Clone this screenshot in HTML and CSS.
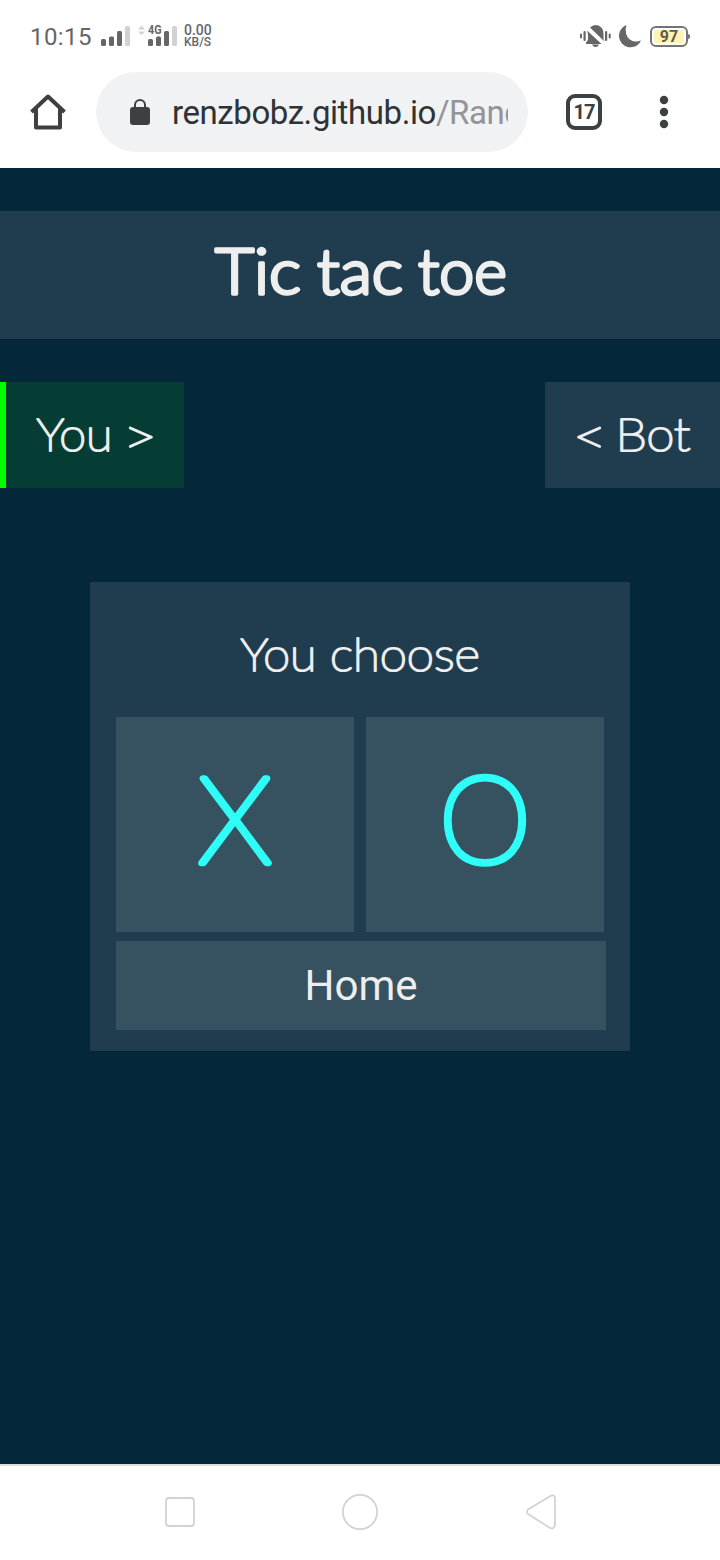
FILE: index.html
```html
<!DOCTYPE html>
<html lang="en">
<head>
<meta charset="utf-8">
<title>Tic tac toe</title>
<link rel="stylesheet" href="styles.css">
</head>
<body>
<header class="status">
  <span class="clock">10:15</span>
  <svg class="signal" width="30" height="20" viewBox="0 0 30 20"><g fill="#666"><rect x="0" y="13" width="5" height="7" rx="1.5"/><rect x="8" y="10.500" width="5" height="9.500" rx="1.500"/><rect x="16" y="5" width="5" height="15" rx="1.500"/></g><rect x="24" y="0" width="5" height="20" rx="1.500" fill="#d2d2d2"/></svg>
  <svg class="mobile" width="40" height="22" viewBox="0 0 40 22"><path d="M0 5.500 3.500 1.500 7 5.500zM0 7.500 3.500 11 7 7.500z" fill="#d2d2d2"/><text class="gen" x="10" y="10" textLength="13.500" lengthAdjust="spacingAndGlyphs">4G</text><g fill="#666"><rect x="10" y="15" width="5" height="7" rx="1.500"/><rect x="18" y="12.500" width="5" height="9.500" rx="1.500"/><rect x="26" y="7" width="5" height="15" rx="1.500"/></g><rect x="34" y="2" width="5" height="20" rx="1.500" fill="#d2d2d2"/></svg>
  <span class="speed"><span class="rate">0.00</span><span class="unit">KB/S</span></span>
  <svg class="muted" width="32" height="24" viewBox="0 0 32 24"><g fill="#666"><rect x="0" y="9.500" width="2" height="5" rx="1"/><rect x="3.500" y="7" width="2.200" height="10" rx="1"/><rect x="25" y="7" width="2.200" height="10" rx="1"/><rect x="28.700" y="9.500" width="2" height="5" rx="1"/><path d="M7 6.500 21.500 20H6v-1.500L8 16v-5.500Q7.500 8 7 6.500z"/><path d="M10 3.500Q12 1.500 15 1q8 0 8.500 8.500V15l1 2.500zM12 20.500h7Q18 23 15.500 23T12 20.500z"/></g></svg>
  <svg class="moon" width="24" height="24" viewBox="0 0 24 24"><path d="M8.500 1A11.500 11.500 0 1 0 23 16.500Q14 19.500 9.500 13 6.500 7.500 8.500 1z" fill="#666"/></svg>
  <span class="battery"><span class="charge">97</span></span>
</header>
<nav class="toolbar">
  <svg class="home" width="36" height="38" viewBox="0 0 36 38"><path d="M1.500 19 18 3.500 34.500 19M6 15.500V34.500h24V15.500" fill="none" stroke="#3c4043" stroke-width="4" stroke-linejoin="round"/></svg>
  <div class="address">
    <svg class="lock" width="20" height="26" viewBox="0 0 20 26"><rect y="8" width="20" height="18" rx="3" fill="#3c4043"/><path d="M5 9V6a5 5 0 0 1 10 0v3" fill="none" stroke="#3c4043" stroke-width="2"/></svg>
    <div class="url">renzbobz.github.io<span class="path">/Rand</span></div>
  </div>
  <span class="tabs">17</span>
  <svg class="more" width="10" height="34" viewBox="0 0 10 34"><g fill="#3c4043"><circle cx="5" cy="5" r="4.200"/><circle cx="5" cy="17" r="4.200"/><circle cx="5" cy="29" r="4.200"/></g></svg>
</nav>
<main class="game">
  <h1 class="title"><svg width="720" height="128"><text class="heading" x="215" y="83" textLength="86" lengthAdjust="spacingAndGlyphs">Tic</text><text class="heading" x="317" y="83" textLength="86" lengthAdjust="spacingAndGlyphs">tac</text><text class="heading" x="418" y="83" textLength="89" lengthAdjust="spacingAndGlyphs">toe</text></svg></h1>
  <div class="players">
    <div class="player active"><svg width="178" height="106"><text class="label" x="30.500" y="69" textLength="76" lengthAdjust="spacingAndGlyphs">You</text><text class="label sign" x="117" y="71.500" textLength="34" lengthAdjust="spacingAndGlyphs">&gt;</text></svg></div>
    <div class="player"><svg width="175" height="106"><text class="label sign" x="28" y="71.500" textLength="34" lengthAdjust="spacingAndGlyphs">&lt;</text><text class="label" x="70.500" y="69" textLength="75" lengthAdjust="spacingAndGlyphs">Bot</text></svg></div>
  </div>
  <section class="dialog">
    <svg class="prompt" width="540" height="135"><text class="label" x="150.500" y="89" textLength="76" lengthAdjust="spacingAndGlyphs">You</text><text class="label" x="240" y="89" textLength="150" lengthAdjust="spacingAndGlyphs">choose</text></svg>
    <div class="choices">
      <button class="choice"><svg width="238" height="214"><text class="mark" x="82" y="146" textLength="74" lengthAdjust="spacingAndGlyphs">X</text></svg></button>
      <button class="choice"><svg width="238" height="214"><text class="mark" x="73" y="146" textLength="92" lengthAdjust="spacingAndGlyphs">O</text></svg></button>
    </div>
    <button class="back">Home</button>
  </section>
</main>
<footer class="system-nav">
  <svg width="36" height="36" viewBox="0 0 36 36"><rect x="4" y="4" width="28" height="28" rx="3"/></svg>
  <svg width="36" height="36" viewBox="0 0 36 36"><circle cx="18" cy="18" r="17.100"/></svg>
  <svg width="36" height="36" viewBox="0 0 36 36"><path d="M6 15.500 28 2.200Q32 0 33 3.500V31q-1 4.500-5 3L6 20Q4 18 6 15.500z"/></svg>
</footer>
</body>
</html>
```
FILE: styles.css
```css
* { box-sizing: border-box; }
body { margin: 0; width: 720px; height: 1560px; display: flex; flex-direction: column; background: #fff; font-family: Roboto, sans-serif; overflow: hidden; }
svg { display: block; flex: none; }
button { border: 0; padding: 0; margin: 0; }

.status { height: 72px; display: flex; align-items: center; padding: 0 30px; color: #666; }
.clock { width: 71px; font-size: 24px; line-height: 28px; letter-spacing: .4px; padding-top: 2px; }
.signal { margin-right: 7px; }
.mobile { margin-top: -2px; }
.gen { font: 700 12px Roboto, sans-serif; fill: #666; }
.speed { display: flex; flex-direction: column; margin-left: 6px; width: 40px; font-weight: 500; }
.rate { font-size: 14px; line-height: 12px; }
.unit { font-size: 12px; line-height: 12px; }
.muted { margin-left: auto; }
.moon { margin: 0 8px 0 6px; }
.battery { position: relative; width: 38px; height: 21px; border: 2px solid #747474; border-radius: 6px; padding: 2px; margin-right: 2px; }
.battery::after { content: ""; position: absolute; right: -4px; top: 6px; width: 2px; height: 5px; background: #747474; border-radius: 0 2px 2px 0; }
.charge { display: block; height: 13px; background: #fff3b8; border-radius: 3px; text-align: center; font-size: 16px; line-height: 14px; font-weight: 700; color: #5f5b4a; }

.toolbar { height: 96px; display: flex; align-items: center; padding: 0 50px 16px 30px; }
.address { display: flex; align-items: center; width: 432px; height: 80px; margin-left: 30px; padding: 0 20px 0 34px; border-radius: 40px; background: #f1f2f4; }
.lock { margin-right: 22px; }
.url { flex: 1; overflow: hidden; white-space: nowrap; font-size: 33px; letter-spacing: -.42px; line-height: 44px; color: #303336; padding-top: 2px; }
.path { color: #929496; }
.tabs { width: 36px; height: 36px; margin-left: 38px; border: 4px solid #3c4043; border-radius: 9px; text-align: center; font-size: 20px; letter-spacing: -1px; line-height: 28px; font-weight: 700; color: #3c4043; }
.more { margin-left: 57px; }

.game { height: 1296px; padding-top: 43px; background: #042839; }
.title { margin: 0; height: 128px; background: #1f3d4e; }
.heading { font: 300 64px Lato, sans-serif; fill: #eee; stroke: #eee; stroke-width: 3.400px; stroke-linejoin: round; }
.players { display: flex; justify-content: space-between; margin-top: 43px; }
.player { height: 106px; background: #1f3d4e; }
.active { border-left: 6px solid #0f0; background: #053d35; }
.label { font: 100 45px Lato, sans-serif; fill: #eee; stroke: #eee; stroke-width: 2.200px; stroke-linejoin: round; }
.sign { font-size: 50px; }
.dialog { width: 540px; height: 469px; margin: 93.500px auto 0; background: #1f3d4e; }
.prompt { height: 135.500px; }
.choices { display: flex; gap: 12px; padding-left: 26px; }
.choice { width: 238px; height: 214.500px; background: #36515f; }
.mark { font: 100 120px Lato, sans-serif; fill: #2efef7; stroke: #2efef7; stroke-width: 6.600px; stroke-linejoin: round; }
.back { display: block; width: 490px; height: 89px; margin: 9.500px 0 0 26px; background: #36515f; color: #eee; font: 400 42px Roboto, sans-serif; }

.system-nav { height: 96px; border-top: 2px solid #dededb; display: flex; justify-content: center; gap: 144px; padding-top: 28px; }
.system-nav svg { fill: none; stroke: #d3d3d3; stroke-width: 1.800px; stroke-linejoin: round; }
```
